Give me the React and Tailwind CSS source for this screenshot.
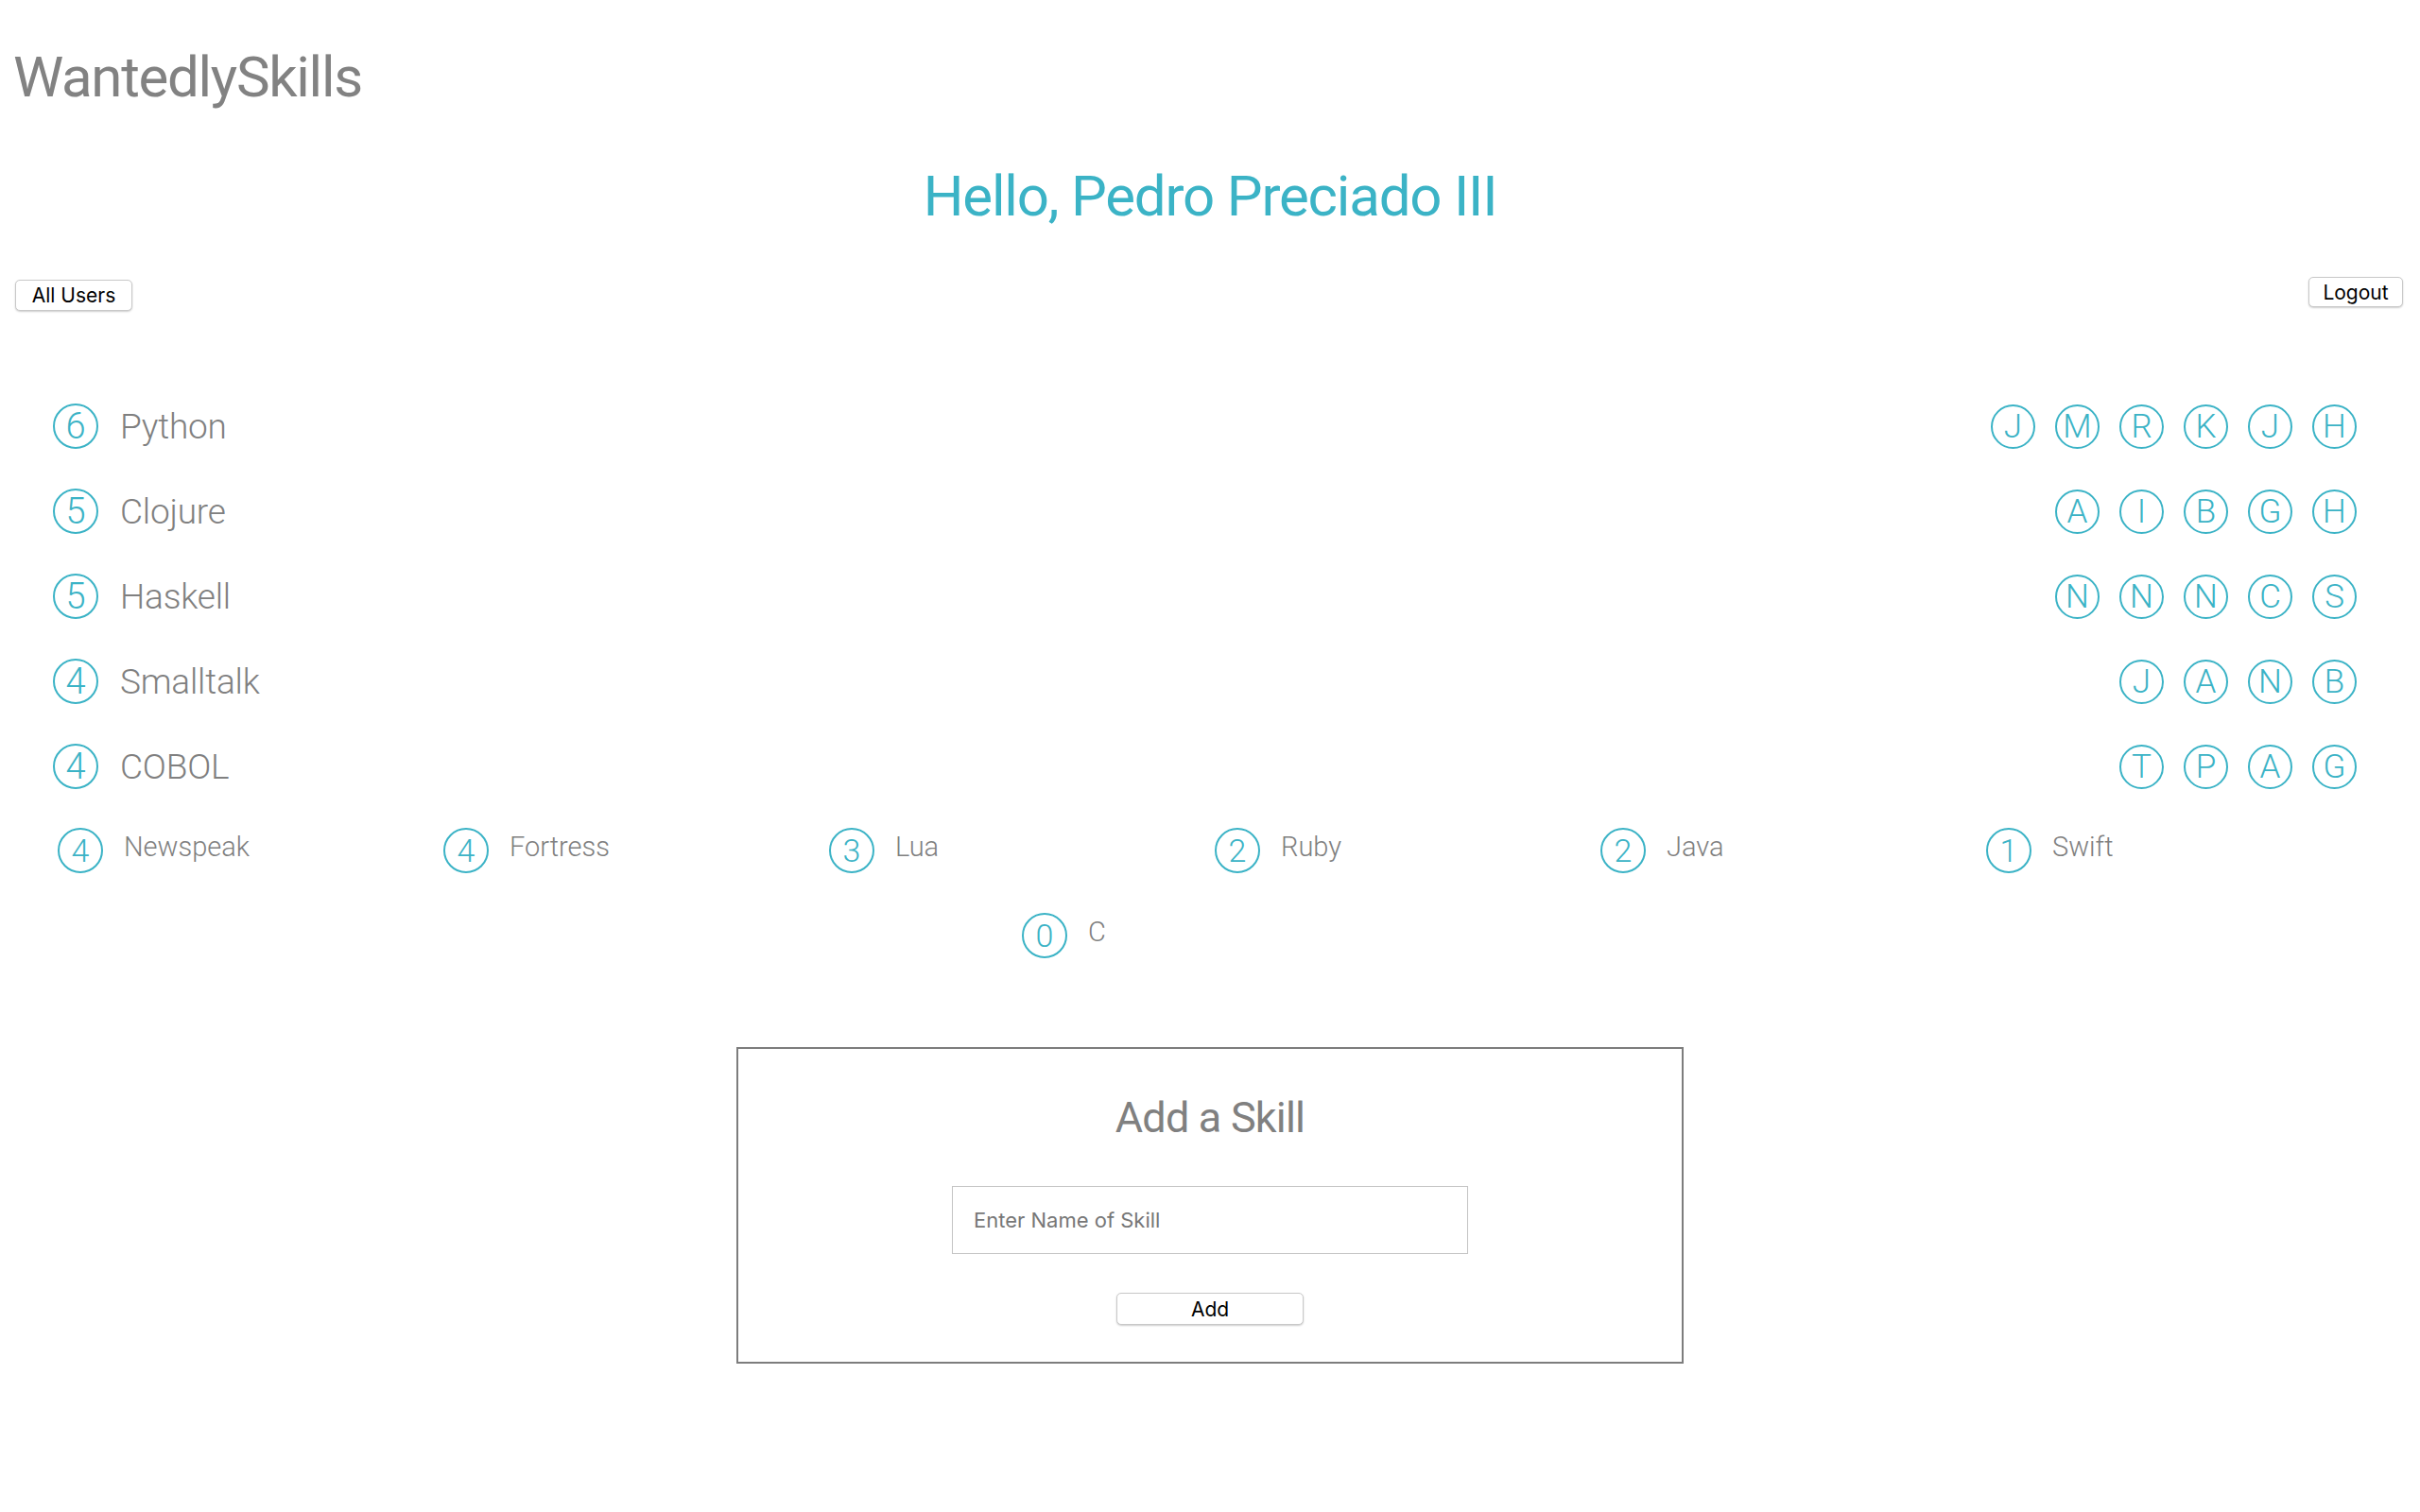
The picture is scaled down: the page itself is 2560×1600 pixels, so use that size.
import React from "react";

const top = [
  { n: 6, name: "Python", users: ["J", "M", "R", "K", "J", "H"] },
  { n: 5, name: "Clojure", users: ["A", "I", "B", "G", "H"] },
  { n: 5, name: "Haskell", users: ["N", "N", "N", "C", "S"] },
  { n: 4, name: "Smalltalk", users: ["J", "A", "N", "B"] },
  { n: 4, name: "COBOL", users: ["T", "P", "A", "G"] },
];

const rest = [
  { n: 4, name: "Newspeak" },
  { n: 4, name: "Fortress" },
  { n: 3, name: "Lua" },
  { n: 2, name: "Ruby" },
  { n: 2, name: "Java" },
  { n: 1, name: "Swift" },
  { n: 0, name: "C" },
];

function Circle({ children, size = "w-[48px] h-[48px]", text = "text-[38px]" }) {
  return (
    <div
      className={`${size} ${text} shrink-0 rounded-full border-2 border-[#3bb3c6] text-[#3bb3c6] font-light flex items-center justify-center leading-none`}
    >
      {children}
    </div>
  );
}

export default function App() {
  const btn =
    "bg-white border border-[#c9c9c9] rounded-[5px] shadow-[0_1px_2px_rgba(0,0,0,0.2)] text-black text-[21px] leading-none";
  return (
    <div
      className="w-full min-h-[1600px] bg-white"
      style={{ fontFamily: "Roboto, 'Noto Sans', sans-serif" }}
    >
      <h1 className="pt-[52px] pl-[14px] text-[60px] leading-[60px] text-[#828282] font-normal tracking-[-1.3px]">
        WantedlySkills
      </h1>
      <h2 className="mt-[66px] text-center text-[60px] leading-[60px] text-[#3bb3c6] font-normal tracking-[-1.2px]">
        Hello, Pedro Preciado III
      </h2>
      <div
        className="mt-[55px] flex justify-between items-start pl-[16px] pr-[18px]"
        style={{ fontFamily: "Inter, 'Liberation Sans', sans-serif" }}
      >
        <button className={`${btn} mt-[3px] w-[124px] h-[33px]`}>All Users</button>
        <button className={`${btn} w-[100px] h-[32px]`}>Logout</button>
      </div>

      <div className="mt-[77px] pl-[56px] pr-[67px]">
        {top.map((s, i) => (
          <div key={i} className="h-[90px] flex items-center justify-between">
            <div className="flex items-center gap-[23px]">
              <Circle>{s.n}</Circle>
              <span className="text-[37px] font-light text-[#808080] leading-none tracking-[-0.2px]">
                {s.name}
              </span>
            </div>
            <div className="flex items-center gap-[21px]">
              {s.users.map((u, j) => (
                <Circle key={j} size="w-[47px] h-[47px]" text="text-[35px]">
                  {u}
                </Circle>
              ))}
            </div>
          </div>
        ))}
      </div>

      <div className="-mt-[1px] px-[56px] flex flex-wrap justify-center">
        {rest.map((s, i) => (
          <div key={i} className="w-[408px] h-[90px] flex items-center pl-[5px] gap-[22px]">
            <Circle text="text-[34px]">{s.n}</Circle>
            <span className="text-[29px] font-light text-[#808080] leading-none mb-[8px]">
              {s.name}
            </span>
          </div>
        ))}
      </div>

      <div className="mt-[73px] mx-auto w-[1002px] h-[335px] border-2 border-[#7d7d7d] flex flex-col items-center pt-[50px]">
        <h3 className="text-[45px] leading-[45px] font-normal text-[#808080] tracking-[-0.8px]">
          Add a Skill
        </h3>
        <input
          placeholder="Enter Name of Skill"
          className="mt-[50px] w-[546px] h-[72px] border border-[#c4c4c4] pl-[22px] text-[22px] placeholder-[#777] outline-none"
          style={{ fontFamily: "Inter, 'Liberation Sans', sans-serif" }}
        />
        <button
          className={`${btn} mt-[41px] w-[198px] h-[34px]`}
          style={{ fontFamily: "Inter, 'Liberation Sans', sans-serif" }}
        >
          Add
        </button>
      </div>
    </div>
  );
}
